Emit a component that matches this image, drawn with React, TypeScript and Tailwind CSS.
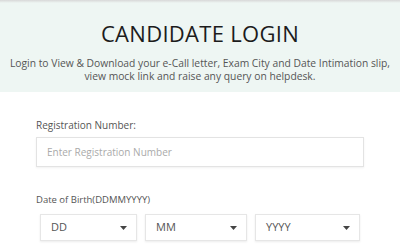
const font = { fontFamily: '"Open Sans", "Noto Sans", sans-serif' };

function Caret() {
  return (
    <svg width="7" height="4" viewBox="0 0 7 4" className="shrink-0">
      <path d="M0 0h7L3.5 4z" fill="#444" />
    </svg>
  );
}

function DobSelect({ label, width }: { label: string; width: string }) {
  return (
    <div
      className={`${width} h-[27px] flex items-center justify-between pl-[10px] pr-[9px] bg-white border border-[#e6e6e6] shadow-[0_1px_2px_rgba(0,0,0,0.08)] text-[11px] text-[#555]`}
    >
      <span>{label}</span>
      <Caret />
    </div>
  );
}

export default function App() {
  return (
    <div className="w-[400px] h-[251px] overflow-hidden bg-white" style={font}>
      <div className="h-[3px] bg-gradient-to-b from-[#d8d8d8] to-[#eef6f3]" />
      <div className="h-[89px] bg-[#eef6f3] flex flex-col items-center pt-[16px]">
        <h1 className="text-[22px] leading-[29px] text-[#1c1c1c] tracking-[0.3px]">
          CANDIDATE LOGIN
        </h1>
        <p className="mt-[9px] text-[10.3px] leading-[12.5px] text-[#555] text-center px-[6px]">
          Login to View &amp; Download your e-Call letter, Exam City and Date Intimation slip,
          <br />
          view mock link and raise any query on helpdesk.
        </p>
      </div>
      <div className="px-[36px] pt-[27px]">
        <label className="block text-[10px] leading-[12px] text-[#555]">
          Registration Number:
        </label>
        <div className="mt-[6px] w-[328px] h-[30px] flex items-center px-[10px] bg-white border border-[#e3e3e3] shadow-[0_1px_2px_rgba(0,0,0,0.06)] text-[10px] text-[#aaa]">
          Enter Registration Number
        </div>
        <label className="block mt-[27px] text-[9.5px] leading-[12px] text-[#555]">
          Date of Birth(DDMMYYYY)
        </label>
        <div className="mt-[8px] ml-[4px] flex gap-[8px]">
          <DobSelect label="DD" width="w-[97px]" />
          <DobSelect label="MM" width="w-[102px]" />
          <DobSelect label="YYYY" width="w-[105px]" />
        </div>
      </div>
    </div>
  );
}
